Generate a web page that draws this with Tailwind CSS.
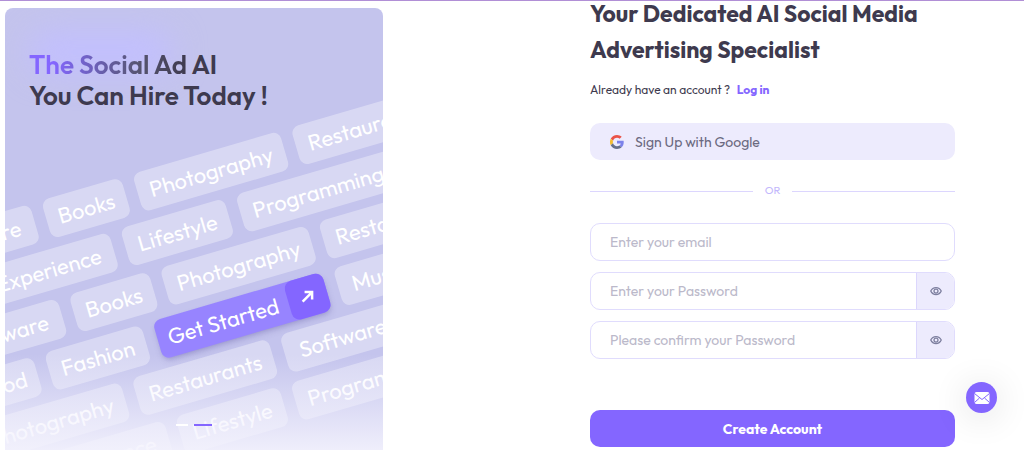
<!DOCTYPE html>
<html lang="en">
<head>
<meta charset="utf-8">
<meta name="viewport" content="width=device-width, initial-scale=1">
<title>Create Account</title>
<script src="https://cdn.jsdelivr.net/npm/@tailwindcss/browser@4"></script>
</head>
<body class="bg-white font-[Outfit,Lato,sans-serif] text-[#3e3a4e]">
<main class="grid h-screen min-h-[450px] grid-cols-[378fr_207fr_365fr] overflow-hidden border-t border-[#b18fd6] pl-[5px] pr-[69px]">

  <section class="relative mt-[7px] overflow-hidden rounded-t-lg bg-[#c4c4ed]">
    <!-- soft glow behind the headline -->
    <div class="absolute top-6 left-6 h-10 w-36 rounded-full bg-[#c2bfff] blur-lg"></div>

    <!-- tilted wall of interest tags -->
    <div class="absolute -top-2 -left-[5px] flex w-[600px] origin-top-left rotate-[-16.3deg] flex-col gap-[9px] pt-[204px] text-[22px] text-white *:flex *:h-10 *:gap-3 *:*:flex *:*:shrink-0 *:*:items-center *:*:justify-center *:*:rounded-lg">
      <div class="-ml-[149px]">
        <span class="w-[120px] bg-white/35">Software</span><span class="w-[83px] bg-white/35">Books</span><span class="w-[153px] bg-white/35">Photography</span><span class="w-[142px] bg-white/35">Restaurants</span>
      </div>
      <div class="-ml-[97px]">
        <span class="w-[136px] bg-white/35">Experience</span><span class="w-[108px] bg-white/35">Lifestyle</span><span class="w-[161px] bg-white/35">Programming</span>
      </div>
      <div class="-ml-[149px]">
        <span class="w-[120px] bg-white/35">Software</span><span class="w-[83px] bg-white/35">Books</span><span class="w-[153px] bg-white/35">Photography</span><span class="w-[142px] bg-white/35">Restaurants</span>
      </div>
      <div class="-ml-[142px]">
        <span class="w-[73px] bg-white/35">Food</span><span class="w-[101px] bg-white/35">Fashion</span><a href="#signup" class="w-[176px] bg-[#9784ff] shadow-md shadow-[#6b64a8]/30"><span class="flex-1 text-center">Get Started</span><span class="flex h-10 w-10 items-center justify-center rounded-lg bg-[#8466ff]"><svg class="size-[18px] rotate-[16deg]" viewBox="0 0 18 18" fill="none" stroke="currentColor" stroke-width="2.500"><path d="M4 14 13 5M6 4.500H13.500V12"/></svg></span></a><span class="w-[84px] bg-white/35">Music</span>
      </div>
      <div class="-ml-[145px]">
        <span class="w-[153px] bg-white/35">Photography</span><span class="w-[142px] bg-white/35">Restaurants</span><span class="w-[120px] bg-white/35">Software</span>
      </div>
      <div class="-ml-[97px]">
        <span class="w-[136px] bg-white/35">Experience</span><span class="w-[108px] bg-white/35">Lifestyle</span><span class="w-[161px] bg-white/35">Programming</span>
      </div>
    </div>

    <div class="absolute inset-x-0 bottom-0 h-24 bg-linear-to-b from-[#f4f3fd]/0 to-[#f4f3fd]/90"></div>

    <h2 class="relative px-6 pt-[41px] text-[26px] leading-[31px] font-semibold"><span class="bg-linear-to-r from-[#8466ff] from-15% via-[#56546f] via-70% to-[#3e3a4e] bg-clip-text text-transparent">The Social Ad</span> AI<br>You Can Hire Today !</h2>

    <div class="absolute inset-x-0 bottom-6 flex justify-center gap-[6px]">
      <span class="h-[2px] w-3 bg-white"></span><span class="h-[2px] w-[18px] bg-[#8466ff]"></span>
    </div>
  </section>

  <form id="signup" class="col-start-3 flex flex-col text-sm">
    <h1 class="-mt-[5px] text-[23px] leading-9 font-bold whitespace-nowrap">Your Dedicated AI Social Media<br>Advertising Specialist</h1>
    <p class="mt-3 text-xs leading-5">Already have an account ? <a href="#login" class="ml-1 font-bold text-[#8466ff]">Log in</a></p>

    <button type="button" class="mt-[23px] flex h-[37px] shrink-0 items-center gap-[11px] rounded-[10px] bg-[#edebfd] px-5 text-[#6b6980]">
      <svg class="size-[14px]" viewBox="0 0 48 48"><path fill="#ea5348" d="M24 9.500c3.500 0 6.700 1.200 9.200 3.600l6.900-6.900C35.900 2.400 30.500 0 24 0 14.600 0 6.500 5.400 2.600 13.200l8 6.200C12.400 13.700 17.700 9.500 24 9.500z"/><path fill="#7c82ea" d="M47 24.600c0-1.600-.2-3.100-.4-4.600H24v9h12.900c-.6 3-2.200 5.500-4.700 7.200l7.700 6C44.400 38 47 32 47 24.600z"/><path fill="#f5bd30" d="M10.500 28.600a14.500 14.500 0 0 1 0-9.200l-8-6.200a24 24 0 0 0 0 21.600z"/><path fill="#66708a" d="M24 48c6.500 0 11.900-2.100 15.900-5.800l-7.700-6c-2.200 1.500-4.900 2.300-8.200 2.300-6.300 0-11.600-4.200-13.500-9.900l-8 6.200C6.500 42.600 14.600 48 24 48z"/></svg>
      Sign Up with Google
    </button>

    <div class="mt-[19px] flex h-6 items-center gap-3 text-[11px] text-[#c3b8fc]"><span class="h-px flex-1 bg-[#dcd6fe]"></span>OR<span class="h-px flex-1 bg-[#dcd6fe]"></span></div>

    <div class="mt-5 flex flex-col gap-[11px]">
      <input type="email" aria-label="Email" placeholder="Enter your email" class="h-[38px] w-full rounded-[10px] border border-[#e0dcfd] px-[19px] outline-none placeholder:text-[#bbb9ca]">
      <div class="flex h-[38px] overflow-hidden rounded-[10px] border border-[#e0dcfd]">
        <input type="password" aria-label="Password" placeholder="Enter your Password" class="min-w-0 flex-1 px-[19px] outline-none placeholder:text-[#bbb9ca]">
        <button type="button" aria-label="Show password" class="flex w-[38px] items-center justify-center border-l border-[#dcd7fd] bg-[#edebfd] text-[#7d7f9f]"><svg class="size-3" viewBox="0 0 24 24" fill="none" stroke="currentColor" stroke-width="2.500"><path d="M1.500 12C3.500 7.500 7.500 5 12 5s8.500 2.500 10.500 7c-2 4.500-6 7-10.500 7S3.500 16.500 1.500 12z"/><circle cx="12" cy="12" r="4"/></svg></button>
      </div>
      <div class="flex h-[38px] overflow-hidden rounded-[10px] border border-[#e0dcfd]">
        <input type="password" aria-label="Confirm password" placeholder="Please confirm your Password" class="min-w-0 flex-1 px-[19px] outline-none placeholder:text-[#bbb9ca]">
        <button type="button" aria-label="Show confirmed password" class="flex w-[38px] items-center justify-center border-l border-[#dcd7fd] bg-[#edebfd] text-[#7d7f9f]"><svg class="size-3" viewBox="0 0 24 24" fill="none" stroke="currentColor" stroke-width="2.500"><path d="M1.500 12C3.500 7.500 7.500 5 12 5s8.500 2.500 10.500 7c-2 4.500-6 7-10.500 7S3.500 16.500 1.500 12z"/><circle cx="12" cy="12" r="4"/></svg></button>
      </div>
    </div>

    <button type="submit" class="mt-[51px] h-[37px] shrink-0 rounded-[10px] bg-[#8466ff] font-bold text-white">Create Account</button>
  </form>
</main>

<button type="button" aria-label="Contact us by email" class="fixed right-[27px] bottom-[37px] flex size-[31px] items-center justify-center rounded-full bg-[#8466ff] text-white shadow-[0_4px_36px_rgba(0,0,0,0.14)]">
  <svg class="h-3 w-4" viewBox="0 0 16 12"><rect x=".5" width="15" height="12" rx="2" fill="currentColor"/><path d="M.5 1.500 8 7.500 15.500 1.500M.5 10.500 5.500 6M15.500 10.500 10.500 6" fill="none" stroke="#8466ff" stroke-width="1"/></svg>
</button>
</body>
</html>
